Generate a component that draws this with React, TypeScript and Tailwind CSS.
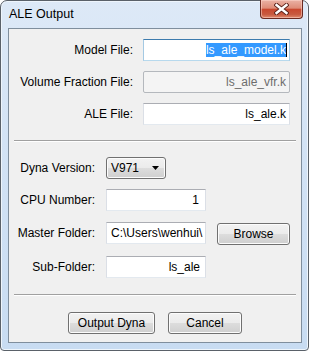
import React from "react";

const font = { fontFamily: '"Liberation Sans", Arial, sans-serif' };

function Btn({ label, w }: { label: string; w: string }) {
  return (
    <div
      className={`${w} h-[22px] rounded-[3px] border border-[#707070] bg-[linear-gradient(to_bottom,#f2f2f2_0%,#ebebeb_50%,#dddddd_50%,#cfcfcf_100%)] shadow-[inset_0_0_0_1px_#fcfcfc] flex items-center justify-center text-[12px] text-black`}
    >
      {label}
    </div>
  );
}

function TextBox({
  children,
  w,
  kind = "normal",
  align = "right",
  pr = "pr-[5px]",
}: {
  children: React.ReactNode;
  w: string;
  kind?: "normal" | "focus" | "disabled";
  align?: "right" | "left";
  pr?: string;
}) {
  const border =
    kind === "focus"
      ? "border border-[#a4c9e3] border-t-[#3d7bad] border-b-[#b7d9ed] bg-white"
      : kind === "disabled"
      ? "border border-[#b4b8bd] bg-[#f4f4f4] text-[#6d6d6d] rounded-[2px]"
      : "border border-[#dbdfe6] border-t-[#abadb3] border-b-[#e3e9ef] bg-white";
  return (
    <div
      className={`${w} h-[22px] ${border} flex items-center overflow-hidden whitespace-nowrap text-[12px] ${
        align === "right" ? `justify-end ${pr}` : "justify-start pl-[4px]"
      }`}
    >
      {children}
    </div>
  );
}

function Sep() {
  return <div className="mx-[5px] h-[2px] border-t border-[#a0a0a0] border-b border-b-white" />;
}

export default function App() {
  return (
    <div className="w-[310px] h-[352px] bg-white" style={font}>
      <div className="w-[309px] h-[351px] rounded-t-[7px] rounded-b-[4px] border border-[#5a6169] bg-[linear-gradient(to_bottom,#dde9f7_0%,#d3e3f5_40%,#c8dcf2_100%)] shadow-[inset_0_0_0_1px_#eef5fc] pl-[7px] pr-[6px] pb-[7px] flex flex-col">
        <div className="h-[27px] flex items-start justify-between">
          <div className="ml-[1px] mt-[6px] text-[12.5px] leading-[15px] text-black">ALE Output</div>
          <div className="-mt-[1px] -mr-[1px] w-[43px] h-[19px] rounded-b-[4px] border border-t-0 border-[#6b2a21] bg-[linear-gradient(to_bottom,#eab2a5_0%,#de8c78_45%,#c9482f_52%,#c85a40_80%,#e08a6e_100%)] shadow-[inset_0_0_0_1px_rgba(255,220,210,0.5)] flex items-center justify-center">
            <svg width="15" height="12" viewBox="0 0 15 12">
              <path d="M2.5 2 L12.5 10 M12.5 2 L2.5 10" stroke="#5a2018" strokeWidth="4.2" strokeLinecap="square" />
              <path d="M2.5 2 L12.5 10 M12.5 2 L2.5 10" stroke="#ffffff" strokeWidth="2.4" strokeLinecap="square" />
            </svg>
          </div>
        </div>
        <div className="flex-1 border border-[#7f8e9d] bg-[#f0f0f0] flex flex-col text-[12px] text-black">
          <div className="pt-[10px] grid grid-cols-[124px_147px] gap-x-[10px] gap-y-[10px] items-center">
            <div className="text-right">Model File:</div>
            <TextBox w="w-[147px]" kind="focus" pr="pr-[2px]">
              <span className="bg-[#3399ff] text-white leading-[14px]">ls_ale_model.k</span>
              <span className="w-[1px] h-[14px] bg-black" />
            </TextBox>
            <div className="text-right">Volume Fraction File:</div>
            <TextBox w="w-[147px]" kind="disabled" pr="pr-[3px]">
              ls_ale_vfr.k
            </TextBox>
            <div className="text-right">ALE File:</div>
            <TextBox w="w-[147px]" pr="pr-[3px]">
              ls_ale.k
            </TextBox>
          </div>

          <div className="mt-[15px]">
            <Sep />
          </div>

          <div className="mt-[15px] flex flex-col">
            <div className="flex items-center">
              <div className="w-[86px] text-right">Dyna Version:</div>
              <div className="ml-[11px] w-[60px] h-[22px] rounded-[3px] border border-[#707070] bg-[linear-gradient(to_bottom,#f2f2f2_0%,#ebebeb_50%,#dddddd_50%,#cfcfcf_100%)] shadow-[inset_0_0_0_1px_#fcfcfc] flex items-center justify-between pl-[4px] pr-[6px]">
                <span>V971</span>
                <svg width="7" height="4" viewBox="0 0 7 4">
                  <path d="M0 0 H7 L3.5 4 Z" fill="#000" />
                </svg>
              </div>
            </div>
            <div className="mt-[10px] flex items-center">
              <div className="w-[86px] text-right">CPU Number:</div>
              <div className="ml-[11px]">
                <TextBox w="w-[100px]" pr="pr-[6px]">1</TextBox>
              </div>
            </div>
            <div className="mt-[10px] flex items-center">
              <div className="w-[86px] text-right">Master Folder:</div>
              <div className="ml-[11px]">
                <TextBox w="w-[100px]" align="left">
                  C:\Users\wenhui\
                </TextBox>
              </div>
              <div className="ml-[11px] mt-[2px]">
                <Btn label="Browse" w="w-[73px]" />
              </div>
            </div>
            <div className="mt-[11px] flex items-center">
              <div className="w-[86px] text-right">Sub-Folder:</div>
              <div className="ml-[11px]">
                <TextBox w="w-[100px]" pr="pr-[5px]">ls_ale</TextBox>
              </div>
            </div>
          </div>

          <div className="mt-[16px]">
            <Sep />
          </div>

          <div className="mt-[16px] flex justify-center gap-[13px]">
            <Btn label="Output Dyna" w="w-[87px]" />
            <Btn label="Cancel" w="w-[74px]" />
          </div>
        </div>
      </div>
    </div>
  );
}
